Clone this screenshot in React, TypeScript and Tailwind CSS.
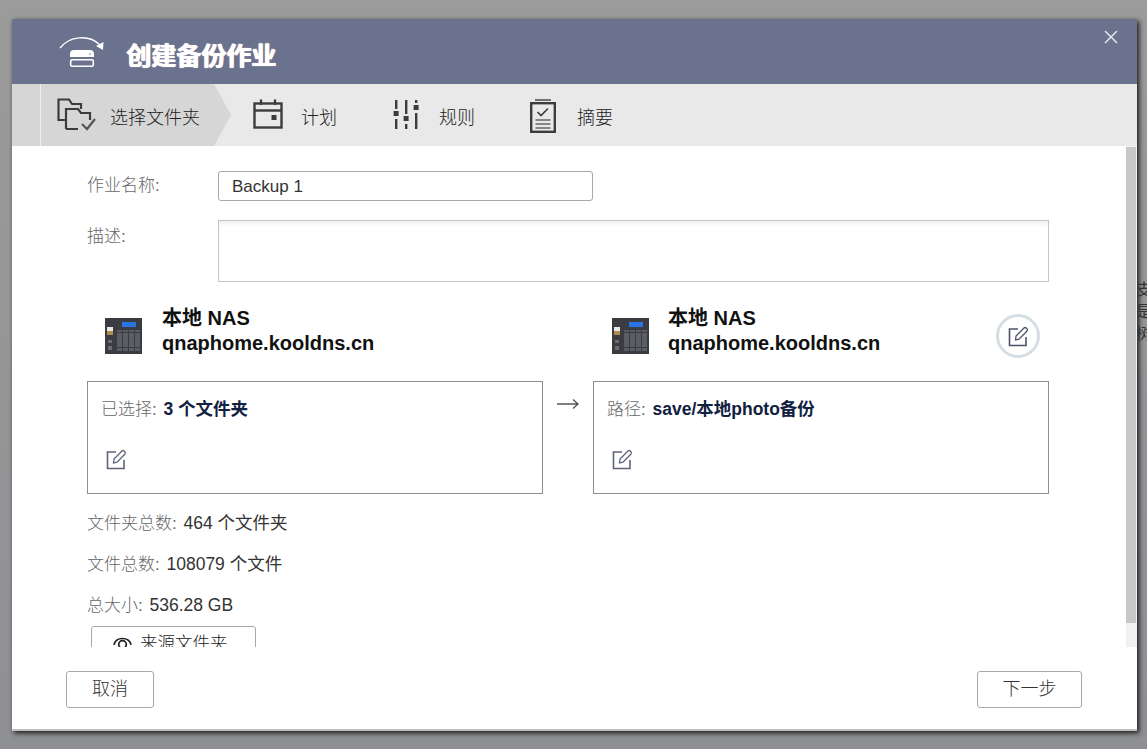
import React from "react";

const font = "font-['Liberation_Sans','Noto_Sans_CJK_SC',sans-serif]";

function BackupLogo() {
  return (
    <svg width="60" height="36" viewBox="0 0 60 36" fill="none" stroke="#fff" strokeWidth="1.3">
      <path d="M1 13 C10 1 30 -1 41 10" />
      <path d="M37 11 L44 15 L44.5 7 Z" fill="#fff" stroke="none" />
      <path d="M11 19 Q11 15 15 15 H31 Q35 15 35 19 V22 H11 Z" fill="#fff" stroke="none" />
      <rect x="11.7" y="24.7" width="22.6" height="6.6" rx="1.5" strokeWidth="1.6" />
      <circle cx="31" cy="19" r="0.8" fill="#6b728e" stroke="none" />
    </svg>
  );
}

function FolderCheckIcon() {
  return (
    <svg width="40" height="33" viewBox="0 0 40 33" fill="none" stroke="#3c3c3c" strokeWidth="2.2">
      <path d="M9 22 H1.5 V1.5 H12 L15 6 H24 V11" />
      <path d="M9 31 V11 H21 L24 15 H33 V22" />
      <path d="M9 31 H21" />
      <path d="M25 26 L30 31 L38 21" stroke="#555" />
    </svg>
  );
}

function CalendarIcon() {
  return (
    <svg width="30" height="30" viewBox="0 0 30 30" fill="none" stroke="#3c3c3c" strokeWidth="2.4">
      <rect x="1.5" y="4.5" width="27" height="24" />
      <path d="M1.5 11.5 H28.5" />
      <path d="M8 0.5 V6 M22 0.5 V6" />
      <rect x="18.5" y="16" width="5" height="5" fill="#3c3c3c" stroke="none" />
    </svg>
  );
}

function SlidersIcon() {
  return (
    <svg width="26" height="29" viewBox="0 0 26 29" fill="#3c3c3c">
      <rect x="2" y="0" width="2.4" height="9" />
      <rect x="0.6" y="11" width="5" height="5" />
      <rect x="2" y="19" width="2.4" height="10" />
      <rect x="12" y="0" width="2.4" height="14" />
      <rect x="10.6" y="16" width="5" height="5" />
      <rect x="12" y="24" width="2.4" height="5" />
      <rect x="22" y="0" width="2.4" height="3" />
      <rect x="20.6" y="5" width="5" height="5" />
      <rect x="22" y="13" width="2.4" height="16" />
    </svg>
  );
}

function SummaryIcon() {
  return (
    <svg width="26" height="34" viewBox="0 0 26 34" fill="none" stroke="#3c3c3c">
      <path d="M5 1 H21" strokeWidth="1.4" />
      <rect x="1.2" y="4.2" width="23.6" height="28.6" strokeWidth="2.4" />
      <path d="M7.5 13 L11 16.5 L18 9.5" strokeWidth="1.6" />
      <path d="M5.5 21 H20.5 M5.5 25 H20.5 M5.5 29 H20.5" strokeWidth="1.6" stroke="#666" />
    </svg>
  );
}

function EditIcon({ color = "#5f6379" }: { color?: string }) {
  return (
    <svg width="21" height="21" viewBox="0 0 21 21" fill="none" stroke={color} strokeWidth="1.6">
      <path d="M10 3 H1.5 V19.5 H18 V11" />
      <path d="M7.5 14 L8 10 L16 2 Q17 1 18.5 2.2 Q20 3.5 19 5 L11 13.2 Z" strokeWidth="1.3" />
    </svg>
  );
}

function NasIcon() {
  return (
    <svg width="37" height="36" viewBox="0 0 37 36">
      <rect width="37" height="36" fill="#3a3c41" />
      <rect x="2" y="9" width="6" height="4" fill="#e8e8e8" />
      <rect x="2" y="13" width="6" height="4" fill="#b08a4e" />
      <rect x="17" y="4" width="14" height="5" fill="#2a74e6" />
      <rect x="12" y="12" width="5" height="21" fill="#5a5d63" />
      <rect x="18" y="12" width="5" height="21" fill="#5a5d63" />
      <rect x="24" y="12" width="5" height="21" fill="#5a5d63" />
      <rect x="30" y="12" width="5" height="21" fill="#5a5d63" />
      <rect x="12" y="29" width="23" height="1" fill="#3a3c41" />
      <rect x="12" y="14" width="23" height="1" fill="#3a3c41" />
      <rect x="3" y="22" width="4" height="3" fill="#6a6d72" />
      <rect x="3" y="28" width="4" height="4" fill="#6a6d72" />
    </svg>
  );
}

function EyeIcon() {
  return (
    <svg width="19" height="16" viewBox="0 0 20 16" fill="none" stroke="#222" strokeWidth="1.8">
      <path d="M1 10 C3 1 17 1 19 10" />
      <circle cx="10" cy="9.5" r="4" />
    </svg>
  );
}

function Step({ icon, label, iconClass, labelClass }: { icon: React.ReactNode; label: string; iconClass: string; labelClass: string }) {
  return (
    <div className="flex items-center">
      <div className={iconClass}>{icon}</div>
      <span className={`text-[18px] font-light text-[#222] mt-[7px] ${labelClass}`}>{label}</span>
    </div>
  );
}

function Endpoint({ extra, pad, gap }: { extra?: React.ReactNode; pad: string; gap: string }) {
  return (
    <div className={`flex items-center h-[60px] ${pad}`}>
      <NasIcon />
      <div className={`${gap} mt-[-11px] text-[20px] leading-[25px] font-bold text-[#111]`}>
        <div>本地 NAS</div>
        <div>qnaphome.kooldns.cn</div>
      </div>
      {extra}
    </div>
  );
}

function PathBox({ label, value }: { label: string; value: string }) {
  return (
    <div className="flex-1 h-[113px] border border-[#8f8f8f] pl-[13px] pt-[16px]">
      <div className="h-[22px] text-[17px] leading-[22px]">
        <span className="text-[#666] font-light">{label}: </span>
        <span className="ml-[2px] text-[17.5px] font-bold text-[#12213f]">{value}</span>
      </div>
      <div className="mt-[29px] ml-[5px]">
        <EditIcon />
      </div>
    </div>
  );
}

function Stat({ label, value, top }: { label: string; value: string; top: string }) {
  return (
    <div className={`h-[22px] ${top}`}>
      <span className="text-[#666] font-light">{label}: </span>
      <span className="ml-[2px] text-[17.5px]">{value}</span>
    </div>
  );
}

export default function App() {
  return (
    <div className={`${font} flex h-[749px] w-[1147px] overflow-hidden bg-gradient-to-b from-[#9b9b9b] to-[#8f9094] pt-[19px] pl-[12px]`}>
      <div className="flex flex-col w-[1125px] h-[712px] bg-white shadow-[2px_2px_5px_rgba(0,0,0,0.85)] shrink-0">
        {/* title bar */}
        <div className="flex items-center h-[65px] bg-[#6b728e] relative shrink-0">
          <div className="ml-[47px] mt-[3px]">
            <BackupLogo />
          </div>
          <h1 className="ml-[7px] mt-[11px] text-[25px] font-bold text-white [text-shadow:1px_0_0_#fff,0_0_1px_#fff]">创建备份作业</h1>
          <svg className="absolute right-[19px] top-[11px]" width="14" height="14" viewBox="0 0 14 14" stroke="#e4e6ec" strokeWidth="1.5">
            <path d="M1 1 L13 13 M13 1 L1 13" />
          </svg>
        </div>

        {/* steps */}
        <div className="flex h-[62px] bg-[#e9e9e9] shrink-0">
          <div className="flex items-center w-[220px] h-[62px] bg-[#d6d6d6] [clip-path:polygon(0_0,202px_0,219px_50%,202px_100%,0_100%)] shrink-0">
            <div className="w-px h-full bg-[#f0f0f0] ml-[28px]" />
            <Step icon={<FolderCheckIcon />} label="选择文件夹" iconClass="ml-[16px] mt-[-2px]" labelClass="ml-[13px]" />
          </div>
          <Step icon={<CalendarIcon />} label="计划" iconClass="ml-[21px] mt-[-2px]" labelClass="ml-[18px]" />
          <Step icon={<SlidersIcon />} label="规则" iconClass="ml-[56px] mt-[-2px]" labelClass="ml-[20px]" />
          <Step icon={<SummaryIcon />} label="摘要" iconClass="ml-[55px] mt-px" labelClass="ml-[21px]" />
        </div>

        {/* content */}
        <div className="flex h-[501px] overflow-hidden shrink-0">
          <div className="w-[1114px] pl-[75px] pt-[25px] shrink-0">
            <div className="flex items-center">
              <span className="w-[131px] text-[17px] font-light text-[#666]">作业名称:</span>
              <div className="w-[375px] h-[30px] border border-[#a8a8a8] rounded-[3px] pl-[13px] text-[17px] leading-[29px] text-[#333]">Backup 1</div>
            </div>
            <div className="flex mt-[19px]">
              <span className="w-[131px] text-[17px] font-light text-[#666] leading-[34px]">描述:</span>
              <div className="w-[831px] h-[62px] border border-[#c4c4c4] shadow-[inset_0_6px_6px_-4px_rgba(0,0,0,0.08)]" />
            </div>

            <div className="flex gap-[50px] w-[962px] mt-[24px]">
              <div className="flex-1">
                <Endpoint pad="pl-[18px]" gap="ml-5" />
              </div>
              <div className="flex-1">
                <Endpoint
                  pad="pl-[19px]"
                  gap="ml-[19px]"
                  extra={
                    <div className="ml-auto mr-[9px] flex items-center justify-center w-[44px] h-[44px] rounded-full border-[3px] border-[#d5dee3]">
                      <EditIcon color="#4e5268" />
                    </div>
                  }
                />
              </div>
            </div>

            <div className="flex w-[962px] mt-[15px]">
              <PathBox label="已选择" value="3 个文件夹" />
              <div className="w-[50px] pt-[17px] flex justify-center">
                <svg width="24" height="12" viewBox="0 0 24 12" fill="none" stroke="#555" strokeWidth="1.4">
                  <path d="M1 6 H22 M17 1.5 L22 6 L17 10.5" />
                </svg>
              </div>
              <PathBox label="路径" value="save/本地photo备份" />
            </div>

            <div className="text-[17px] leading-[22px] text-[#333]">
              <Stat top="mt-[18px]" label="文件夹总数" value="464 个文件夹" />
              <Stat top="mt-[19px]" label="文件总数" value="108079 个文件" />
              <Stat top="mt-[19px]" label="总大小" value="536.28 GB" />
            </div>
            <div className="flex items-center gap-[8px] pl-[21px] ml-[4px] mt-[10px] w-[165px] h-[34px] border border-[#a8a8a8] rounded-[3px] text-[17.5px] font-light text-[#222]">
              <EyeIcon />
              <span>来源文件夹</span>
            </div>
          </div>
          <div className="w-[11px] h-full bg-[#f1f1f1] pt-px shrink-0">
            <div className="w-[10px] h-[476px] bg-[#c8c8c8]" />
          </div>
        </div>

        {/* footer */}
        <div className="flex justify-between items-start flex-1 pl-[54px] pr-[55px] pt-[24px] border-b-2 border-[#c0c0c0]">
          <button className="w-[88px] h-[37px] border border-[#a8a8a8] rounded-[3px] text-[18px] font-light text-[#333]">取消</button>
          <button className="w-[105px] h-[37px] border border-[#a8a8a8] rounded-[3px] text-[18px] font-light text-[#333]">下一步</button>
        </div>
      </div>

      {/* page text behind the dialog, cut off by the window edge */}
      <div className="w-[10px] overflow-hidden pt-[260px] text-[16px] leading-[22px] text-[#333] shrink-0">
        <div className="ml-[-1px]">支</div>
        <div className="ml-[-1px]">是</div>
        <div className="ml-[-1px]">树</div>
      </div>
    </div>
  );
}
